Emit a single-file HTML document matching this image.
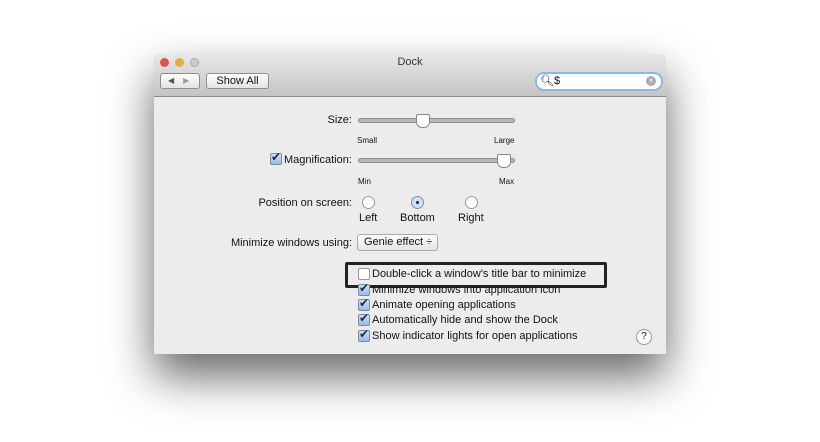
<!DOCTYPE html>
<html><head><style>
body{margin:0;width:820px;height:442px;background:#fff;position:relative;overflow:hidden;font-family:"Liberation Sans",sans-serif;font-size:11px;color:#111}
.a{position:absolute}
#win{left:154px;top:54px;width:512px;height:300px;background:#ececec;box-shadow:0 22px 45px rgba(0,0,0,.6);border-radius:4px 4px 0 0}
#tb{left:0;top:0;width:512px;height:42px;background:linear-gradient(#e8e8e8,#c4c4c4);border-bottom:1px solid #8a8a8a;border-radius:4px 4px 0 0}
.dot{width:9px;height:9px;border-radius:50%;top:4px}
.btn{background:linear-gradient(#fdfdfd,#e4e4e4);border:1px solid #8e8e8e;border-radius:3px}
.lbl{text-align:right;width:200px}
.track{height:3px;background:#b8b8b8;border:1px solid #8d8d8d;border-radius:3px}
.thumb{width:12px;height:12px;background:#fff;border:1px solid #888;border-radius:2px 2px 6px 6px}
.small{font-size:8px}
.radio{width:11px;height:11px;border-radius:50%;border:1px solid #999;background:#fff}
.cb{width:10px;height:10px;border:1px solid #7a8ca8;border-radius:2px;background:linear-gradient(#cfe0f5,#9cbbe2)}
.cb:after{content:"✔";position:absolute;left:0px;top:-4px;font-size:12px;color:#1a2a50}
</style></head><body>
<div id="win" class="a">
 <div id="tb" class="a">
  <div class="a dot" style="left:6px;background:#e05450"></div>
  <div class="a dot" style="left:21px;background:#e2b040"></div>
  <div class="a dot" style="left:36px;background:#ccc;border:1px solid #aaa;width:7px;height:7px"></div>
  <div class="a" style="left:0;width:512px;top:2px;text-align:center;font-size:11px;color:#333">Dock</div>
  <div class="a btn" style="left:6px;top:19px;width:38px;height:14px;font-size:8px;color:#555;line-height:14px"><span style="margin-left:7px">◀</span><span style="margin-left:9px;color:#999">▶</span></div>
  <div class="a btn" style="left:52px;top:19px;width:61px;height:14px;line-height:14px;text-align:center;font-size:11px">Show All</div>
  <div class="a" style="left:381px;top:18px;width:124px;height:15px;background:#fff;border:2px solid #8fb4e6;border-radius:9px;font-size:11px;line-height:15px"><span style="margin-left:3px">🔍︎</span>$</div>
  <div class="a" style="left:492px;top:22px;width:10px;height:10px;border-radius:50%;background:#aaa;color:#fff;font-size:8px;text-align:center;line-height:10px">×</div>
 </div>
</div>
<div class="a lbl" style="left:152px;top:114px">Size:</div>
<div class="a track" style="left:358px;top:118px;width:155px"></div>
<div class="a thumb" style="left:416px;top:114px"></div>
<div class="a small" style="left:357px;top:136px">Small</div>
<div class="a small" style="left:494px;top:136px">Large</div>
<div class="a cb" style="left:270px;top:153px"></div>
<div class="a" style="left:284px;top:154px">Magnification:</div>
<div class="a track" style="left:358px;top:158px;width:155px"></div>
<div class="a thumb" style="left:497px;top:154px"></div>
<div class="a small" style="left:358px;top:177px">Min</div>
<div class="a small" style="left:499px;top:177px">Max</div>
<div class="a lbl" style="left:152px;top:197px">Position on screen:</div>
<div class="a radio" style="left:362px;top:196px"></div>
<div class="a radio" style="left:411px;top:196px;background:#cfe0f5;border-color:#7a8ca8"><div class="a" style="left:4px;top:4px;width:3px;height:3px;border-radius:50%;background:#123"></div></div>
<div class="a radio" style="left:465px;top:196px"></div>
<div class="a" style="left:359px;top:212px">Left</div>
<div class="a" style="left:400px;top:212px">Bottom</div>
<div class="a" style="left:458px;top:212px">Right</div>
<div class="a lbl" style="left:152px;top:237px">Minimize windows using:</div>
<div class="a btn" style="left:357px;top:234px;width:79px;height:15px;line-height:15px;border-color:#aaa"><span style="margin-left:6px">Genie effect ÷</span></div>
<div class="a" style="left:345px;top:262px;width:256px;height:20px;border:3px solid #222;border-radius:2px"></div>
<div class="a" style="left:358px;top:268px;width:10px;height:10px;border:1px solid #999;border-radius:2px;background:#fff"></div>
<div class="a" style="left:372px;top:268px">Double-click a window's title bar to minimize</div>
<div class="a cb" style="left:358px;top:284px"></div><div class="a" style="left:372px;top:284px">Minimize windows into application icon</div>
<div class="a cb" style="left:358px;top:299px"></div><div class="a" style="left:372px;top:299px">Animate opening applications</div>
<div class="a cb" style="left:358px;top:314px"></div><div class="a" style="left:372px;top:314px">Automatically hide and show the Dock</div>
<div class="a cb" style="left:358px;top:330px"></div><div class="a" style="left:372px;top:330px">Show indicator lights for open applications</div>
<div class="a" style="left:636px;top:329px;width:14px;height:14px;border-radius:50%;border:1px solid #999;background:#fafafa;text-align:center;line-height:14px;font-size:10px">?</div>
</body></html>
